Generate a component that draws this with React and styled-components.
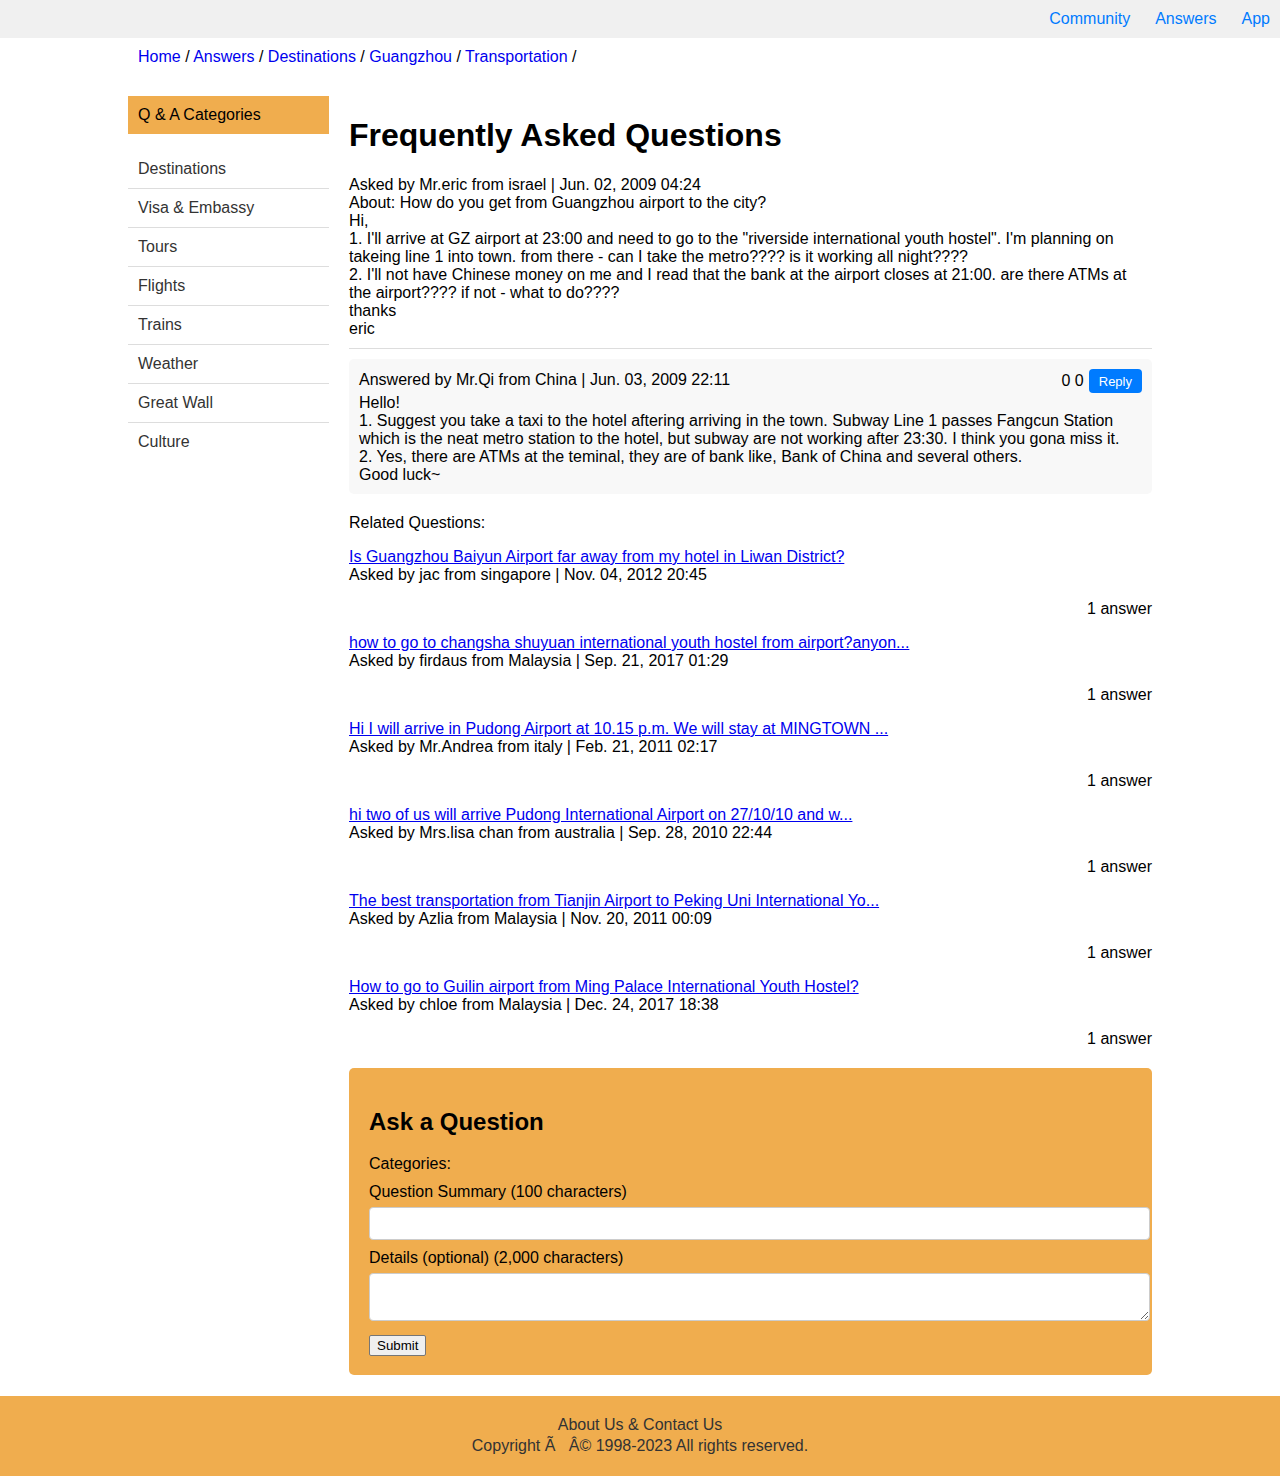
import React from 'react';
import styled, { createGlobalStyle } from 'styled-components';

const GlobalStyle = createGlobalStyle`
	body {
		margin: 0;
		font-family: "Liberation Sans", Arial, sans-serif;
		font-size: 16px;
		color: #000;
		background: #fff;
	}
`;

const TopBar = styled.div`
	height: 38px;
	background: #f0f0f0;
	display: flex;
	justify-content: flex-end;
	align-items: center;
	gap: 25px;
	padding-right: 10px;
`;

const TopLink = styled.a`
	color: #007bff;
	text-decoration: none;
`;

const Container = styled.div`
	width: 1024px;
	margin: 0 auto;
`;

const Breadcrumb = styled.div`
	padding: 10px 10px 0;
	line-height: 18px;

	a {
		color: #0000ee;
		text-decoration: none;
	}
`;

const Layout = styled.div`
	display: flex;
	gap: 20px;
	margin-top: 30px;
	align-items: flex-start;
`;

const Sidebar = styled.aside`
	width: 201px;
	flex: none;
`;

const SideHeader = styled.div`
	background: #f0ad4e;
	padding: 10px;
	line-height: 18px;
`;

const SideList = styled.ul`
	list-style: none;
	margin: 16px 0 0;
	padding: 0;
`;

const SideItem = styled.li`
	padding: 10px;
	line-height: 18px;
	color: #333;
	border-bottom: ${({ $last }) => ($last ? 'none' : '1px solid #ddd')};
`;

const Main = styled.main`
	flex: 1;
	min-width: 0;
`;

const Title = styled.h1`
	font-size: 32px;
	font-weight: bold;
	margin: 21px 0 22px;
	line-height: 37px;
`;

const Text = styled.div`
	line-height: 18px;
`;

const Rule = styled.hr`
	border: 0;
	border-top: 1px solid #ddd;
	margin: 10px 0;
`;

const AnswerBox = styled.div`
	background: #f8f8f8;
	border-radius: 5px;
	padding: 10px;
	line-height: 18px;
`;

const AnswerHead = styled.div`
	display: flex;
	justify-content: space-between;
	align-items: flex-start;
	height: 25px;
`;

const AnswerMeta = styled.span`
	padding-top: 2px;
`;

const Votes = styled.div`
	display: flex;
	align-items: center;
	gap: 5px;
`;

const ReplyButton = styled.button`
	background: #007bff;
	color: #fff;
	border: 0;
	border-radius: 4px;
	font-family: "Liberation Sans", Arial, sans-serif;
	font-size: 13px;
	padding: 0 10px;
	height: 24px;
`;

const RelatedTitle = styled.p`
	margin: 20px 0 16px;
	line-height: 18px;
`;

const RelatedItem = styled.div`
	line-height: 18px;

	a {
		color: #0000ee;
		text-decoration: underline;
	}
`;

const AnswerCount = styled.p`
	text-align: right;
	margin: 16px 0;
	line-height: 18px;
`;

const AskBox = styled.div`
	background: #f0ad4e;
	border-radius: 5px;
	padding: 20px 20px 19px;
	margin-top: 20px;
`;

const AskTitle = styled.h2`
	font-size: 24px;
	font-weight: bold;
	margin: 20px 0 19px;
	line-height: 28px;
`;

const FormGroup = styled.div`
	margin-bottom: ${({ $mb }) => $mb}px;
`;

const Label = styled.label`
	display: block;
	line-height: 18px;
	margin-bottom: ${({ $gap = 6 }) => $gap}px;
`;

const Input = styled.input`
	display: block;
	box-sizing: content-box;
	width: 100%;
	height: 15px;
	padding: 8px;
	border: 1px solid #ccc;
	border-radius: 4px;
	background: #fff;
	font-family: "Liberation Sans", Arial, sans-serif;
	font-size: 14px;
`;

const TextArea = styled.textarea`
	display: block;
	box-sizing: content-box;
	width: 100%;
	height: 30px;
	padding: 8px;
	border: 1px solid #ccc;
	border-radius: 4px;
	background: #fff;
	font-family: "Liberation Sans", Arial, sans-serif;
	font-size: 14px;
`;

const SubmitButton = styled.button`
	font-family: "Liberation Sans", Arial, sans-serif;
	font-size: 13.33px;
	height: 21px;
	padding: 0 7px;
	border: 1px solid #767676;
	border-radius: 2px;
	background: #efefef;
	color: #000;
`;

const Footer = styled.footer`
	margin-top: 21px;
	background: #f0ad4e;
	color: #333;
	text-align: center;
	padding: 18px 0 20px;
	line-height: 21px;
`;

const categories = ['Destinations', 'Visa & Embassy', 'Tours', 'Flights', 'Trains', 'Weather', 'Great Wall', 'Culture'];

const related = [
	{ title: 'Is Guangzhou Baiyun Airport far away from my hotel in Liwan District?', by: 'Asked by jac from singapore | Nov. 04, 2012 20:45' },
	{ title: 'how to go to changsha shuyuan international youth hostel from airport?anyon...', by: 'Asked by firdaus from Malaysia | Sep. 21, 2017 01:29' },
	{ title: 'Hi I will arrive in Pudong Airport at 10.15 p.m. We will stay at MINGTOWN ...', by: 'Asked by Mr.Andrea from italy | Feb. 21, 2011 02:17' },
	{ title: 'hi two of us will arrive Pudong International Airport on 27/10/10 and w...', by: 'Asked by Mrs.lisa chan from australia | Sep. 28, 2010 22:44' },
	{ title: 'The best transportation from Tianjin Airport to Peking Uni International Yo...', by: 'Asked by Azlia from Malaysia | Nov. 20, 2011 00:09' },
	{ title: 'How to go to Guilin airport from Ming Palace International Youth Hostel?', by: 'Asked by chloe from Malaysia | Dec. 24, 2017 18:38' },
];

function App() {
	return (
		<>
			<GlobalStyle />
			<TopBar>
				<TopLink href="#">Community</TopLink>
				<TopLink href="#">Answers</TopLink>
				<TopLink href="#">App</TopLink>
			</TopBar>

			<Container>
				<Breadcrumb>
					<a href="#">Home</a> / <a href="#">Answers</a> / <a href="#">Destinations</a> / <a href="#">Guangzhou</a> / <a href="#">Transportation</a> /
				</Breadcrumb>

				<Layout>
					<Sidebar>
						<SideHeader>Q &amp; A Categories</SideHeader>
						<SideList>
							{categories.map((cat, i) => (
								<SideItem key={cat} $last={i === categories.length - 1}>{cat}</SideItem>
							))}
						</SideList>
					</Sidebar>

					<Main>
						<Title>Frequently Asked Questions</Title>
						<Text>
							Asked by Mr.eric from israel | Jun. 02, 2009 04:24<br />
							About: How do you get from Guangzhou airport to the city?<br />
							Hi,<br />
							1. I'll arrive at GZ airport at 23:00 and need to go to the "riverside international youth hostel". I'm planning on takeing line 1 into town. from there - can I take the metro???? is it working all night????<br />
							2. I'll not have Chinese money on me and I read that the bank at the airport closes at 21:00. are there ATMs at the airport???? if not - what to do????<br />
							thanks<br />
							eric
						</Text>
						<Rule />

						<AnswerBox>
							<AnswerHead>
								<AnswerMeta>Answered by Mr.Qi from China | Jun. 03, 2009 22:11</AnswerMeta>
								<Votes>
									<span>0 0</span>
									<ReplyButton>Reply</ReplyButton>
								</Votes>
							</AnswerHead>
							Hello!<br />
							1. Suggest you take a taxi to the hotel aftering arriving in the town. Subway Line 1 passes Fangcun Station which is the neat metro station to the hotel, but subway are not working after 23:30. I think you gona miss it.<br />
							2. Yes, there are ATMs at the teminal, they are of bank like, Bank of China and several others.<br />
							Good luck~
						</AnswerBox>

						<RelatedTitle>Related Questions:</RelatedTitle>
						{related.map(q => (
							<div key={q.title}>
								<RelatedItem>
									<a href="#">{q.title}</a><br />
									{q.by}
								</RelatedItem>
								<AnswerCount>1 answer</AnswerCount>
							</div>
						))}

						<AskBox>
							<AskTitle>Ask a Question</AskTitle>
							<FormGroup $mb={10}>
								<Label as="div" $gap={0}>Categories:</Label>
							</FormGroup>
							<FormGroup $mb={9}>
								<Label>Question Summary (100 characters)</Label>
								<Input type="text" />
							</FormGroup>
							<FormGroup $mb={14}>
								<Label>Details (optional) (2,000 characters)</Label>
								<TextArea />
							</FormGroup>
							<SubmitButton>Submit</SubmitButton>
						</AskBox>
					</Main>
				</Layout>
			</Container>

			<Footer>
				About Us &amp; Contact Us<br />
				Copyright Ã {'\u00a0\u00a0'}Â© 1998-2023 All rights reserved.
			</Footer>
		</>
	);
}

export default App;
